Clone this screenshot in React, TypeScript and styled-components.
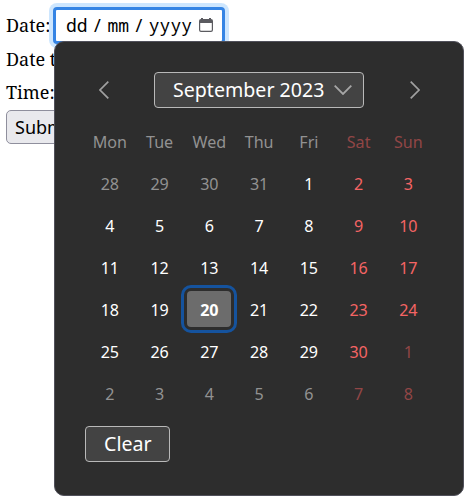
import React from "react";
import styled, { createGlobalStyle, css } from "styled-components";

const GlobalStyle = createGlobalStyle`
  * { box-sizing: border-box; }
  body { margin: 0; background: #fff; overflow: hidden; }
  button { font: inherit; }
`;

const Page = styled.main`
  position: relative;
  width: 469px;
  height: 501px;
  overflow: hidden;
  padding: 7px 6px;
  background: #fff;
  color: #000;
  font: 18px "Noto Serif", "DejaVu Serif Condensed", "DejaVu Serif", serif;
`;

const Form = styled.form`
  display: flex;
  flex-direction: column;
  align-items: flex-start;
`;

const Field = styled.div<{ $height: number }>`
  display: flex;
  align-items: center;
  height: ${(p) => p.$height}px;
  white-space: nowrap;
`;

const Label = styled.label`
  width: 47px;
  padding-bottom: 2px;
`;

const DateInput = styled.div`
  display: flex;
  align-items: center;
  width: 172px;
  height: 37px;
  padding: 0 9px 2px 10px;
  border: 3px solid #3584e4;
  border-radius: 4px;
  box-shadow: 0 0 0 4px #cde6fe;
  background: #fff;
  font: 18px "Noto Sans Mono", "DejaVu Sans Mono", monospace;
`;

const Slash = styled.span`
  width: 19.8px;
  display: flex;
  justify-content: center;
`;

const CalendarGlyph = styled.svg`
  display: block;
  margin-left: auto;
`;

const SubmitButton = styled.button`
  height: 34px;
  padding: 0 8px;
  border: 1px solid #8f8f9d;
  border-radius: 5px;
  background: #e9e9ed;
  color: #000;
  font: 18px "Noto Sans", sans-serif;
`;

const Picker = styled.section`
  position: absolute;
  left: 54px;
  top: 41px;
  width: 410px;
  height: 455px;
  padding: 30px;
  border: 1px solid #50505a;
  border-radius: 10px;
  background: #2d2d2d;
  color: #fff;
  font-family: "Noto Sans", sans-serif;
`;

const PickerHeader = styled.header`
  display: flex;
  align-items: center;
  justify-content: space-between;
  height: 36px;
`;

const ArrowButton = styled.button`
  display: flex;
  align-items: center;
  justify-content: center;
  width: 37px;
  height: 36px;
  padding: 0;
  border: 0;
  background: none;
  color: #a0a0a0;
`;

const DarkButton = styled.button`
  display: flex;
  align-items: center;
  height: 36px;
  padding: 0 18px;
  border: 1px solid #b9b9b9;
  border-radius: 4px;
  background: #434343;
  color: #fff;
  font-size: 19.6px;
  line-height: 34px;
`;

const MonthButton = styled(DarkButton)`
  justify-content: space-between;
  width: 210px;
  padding-right: 11px;
`;

const ClearButton = styled(DarkButton)`
  width: 85px;
  margin-top: 11px;
`;

const Grid = styled.div`
  display: grid;
  grid-template-columns: repeat(7, 49.75px);
  grid-auto-rows: 42px;
  margin-top: 13px;
`;

type CellProps = { $weekend: boolean; $muted: boolean };

const Cell = styled.div<CellProps>`
  display: flex;
  align-items: center;
  justify-content: center;
  font-size: 16.1px;
  color: ${(p) =>
    p.$weekend ? (p.$muted ? "#914646" : "#f46464") : p.$muted ? "#929292" : "#fff"};
`;

const Day = styled.span<{ $today: boolean }>`
  display: flex;
  align-items: center;
  justify-content: center;
  width: 44px;
  height: 36px;
  border-radius: 4px;
  ${(p) =>
    p.$today &&
    css`
      margin-bottom: 2px;
      padding-top: 2px;
      background: #6c6c6c;
      font-weight: 700;
      outline: 3px solid #15539e;
      outline-offset: 3px;
    `}
`;

const WEEKDAYS = ["Mon", "Tue", "Wed", "Thu", "Fri", "Sat", "Sun"];
const TODAY = 20;
const DAYS = Array.from({ length: 42 }, (_, i) => {
  const n = i - 3;
  if (n < 1) return { label: n + 31, muted: true, today: false };
  if (n > 30) return { label: n - 30, muted: true, today: false };
  return { label: n, muted: false, today: n === TODAY };
});

function Chevron({ direction }: { direction: "left" | "right" | "down" }) {
  if (direction === "down") {
    return (
      <svg width="18" height="10" viewBox="0 0 18 10" fill="none" stroke="#a6a6a6" strokeWidth="1.8">
        <path d="M.7.7 9 9 17.3.7" />
      </svg>
    );
  }
  return (
    <svg width="10" height="18" viewBox="0 0 10 18" fill="none" stroke="currentColor" strokeWidth="1.7">
      <path d={direction === "left" ? "M9.3.7 1 9l8.3 8.3" : "M.7.7 9 9 .7 17.3"} />
    </svg>
  );
}

export default function App() {
  return (
    <>
      <GlobalStyle />
      <Page>
        <Form>
          <Field $height={37}>
            <Label>Date:</Label>
            <DateInput>
              <span>dd</span>
              <Slash>/</Slash>
              <span>mm</span>
              <Slash>/</Slash>
              <span>yyyy</span>
              <CalendarGlyph width="14" height="14" viewBox="0 0 14 14">
                <path
                  fill="#5b5b60"
                  fillRule="evenodd"
                  d="M2 0h2v1h6V0h2v1a2 2 0 0 1 2 2v9a2 2 0 0 1-2 2H2a2 2 0 0 1-2-2V3a2 2 0 0 1 2-2ZM1.200 5v7q0 .8.8.8h10q.8 0 .8-.8V5Z"
                />
              </CalendarGlyph>
            </DateInput>
          </Field>
          <Field $height={30}>Date time:</Field>
          <Field $height={36}>Time:</Field>
          <SubmitButton type="button">Submit</SubmitButton>
        </Form>
        <Picker>
          <PickerHeader>
            <ArrowButton type="button" aria-label="Previous month">
              <Chevron direction="left" />
            </ArrowButton>
            <MonthButton type="button">
              September 2023
              <Chevron direction="down" />
            </MonthButton>
            <ArrowButton type="button" aria-label="Next month">
              <Chevron direction="right" />
            </ArrowButton>
          </PickerHeader>
          <Grid>
            {WEEKDAYS.map((name, i) => (
              <Cell key={name} $weekend={i > 4} $muted>
                {name}
              </Cell>
            ))}
            {DAYS.map((day, i) => (
              <Cell key={i} $weekend={i % 7 > 4} $muted={day.muted}>
                <Day $today={day.today}>{day.label}</Day>
              </Cell>
            ))}
          </Grid>
          <ClearButton type="button">Clear</ClearButton>
        </Picker>
      </Page>
    </>
  );
}
